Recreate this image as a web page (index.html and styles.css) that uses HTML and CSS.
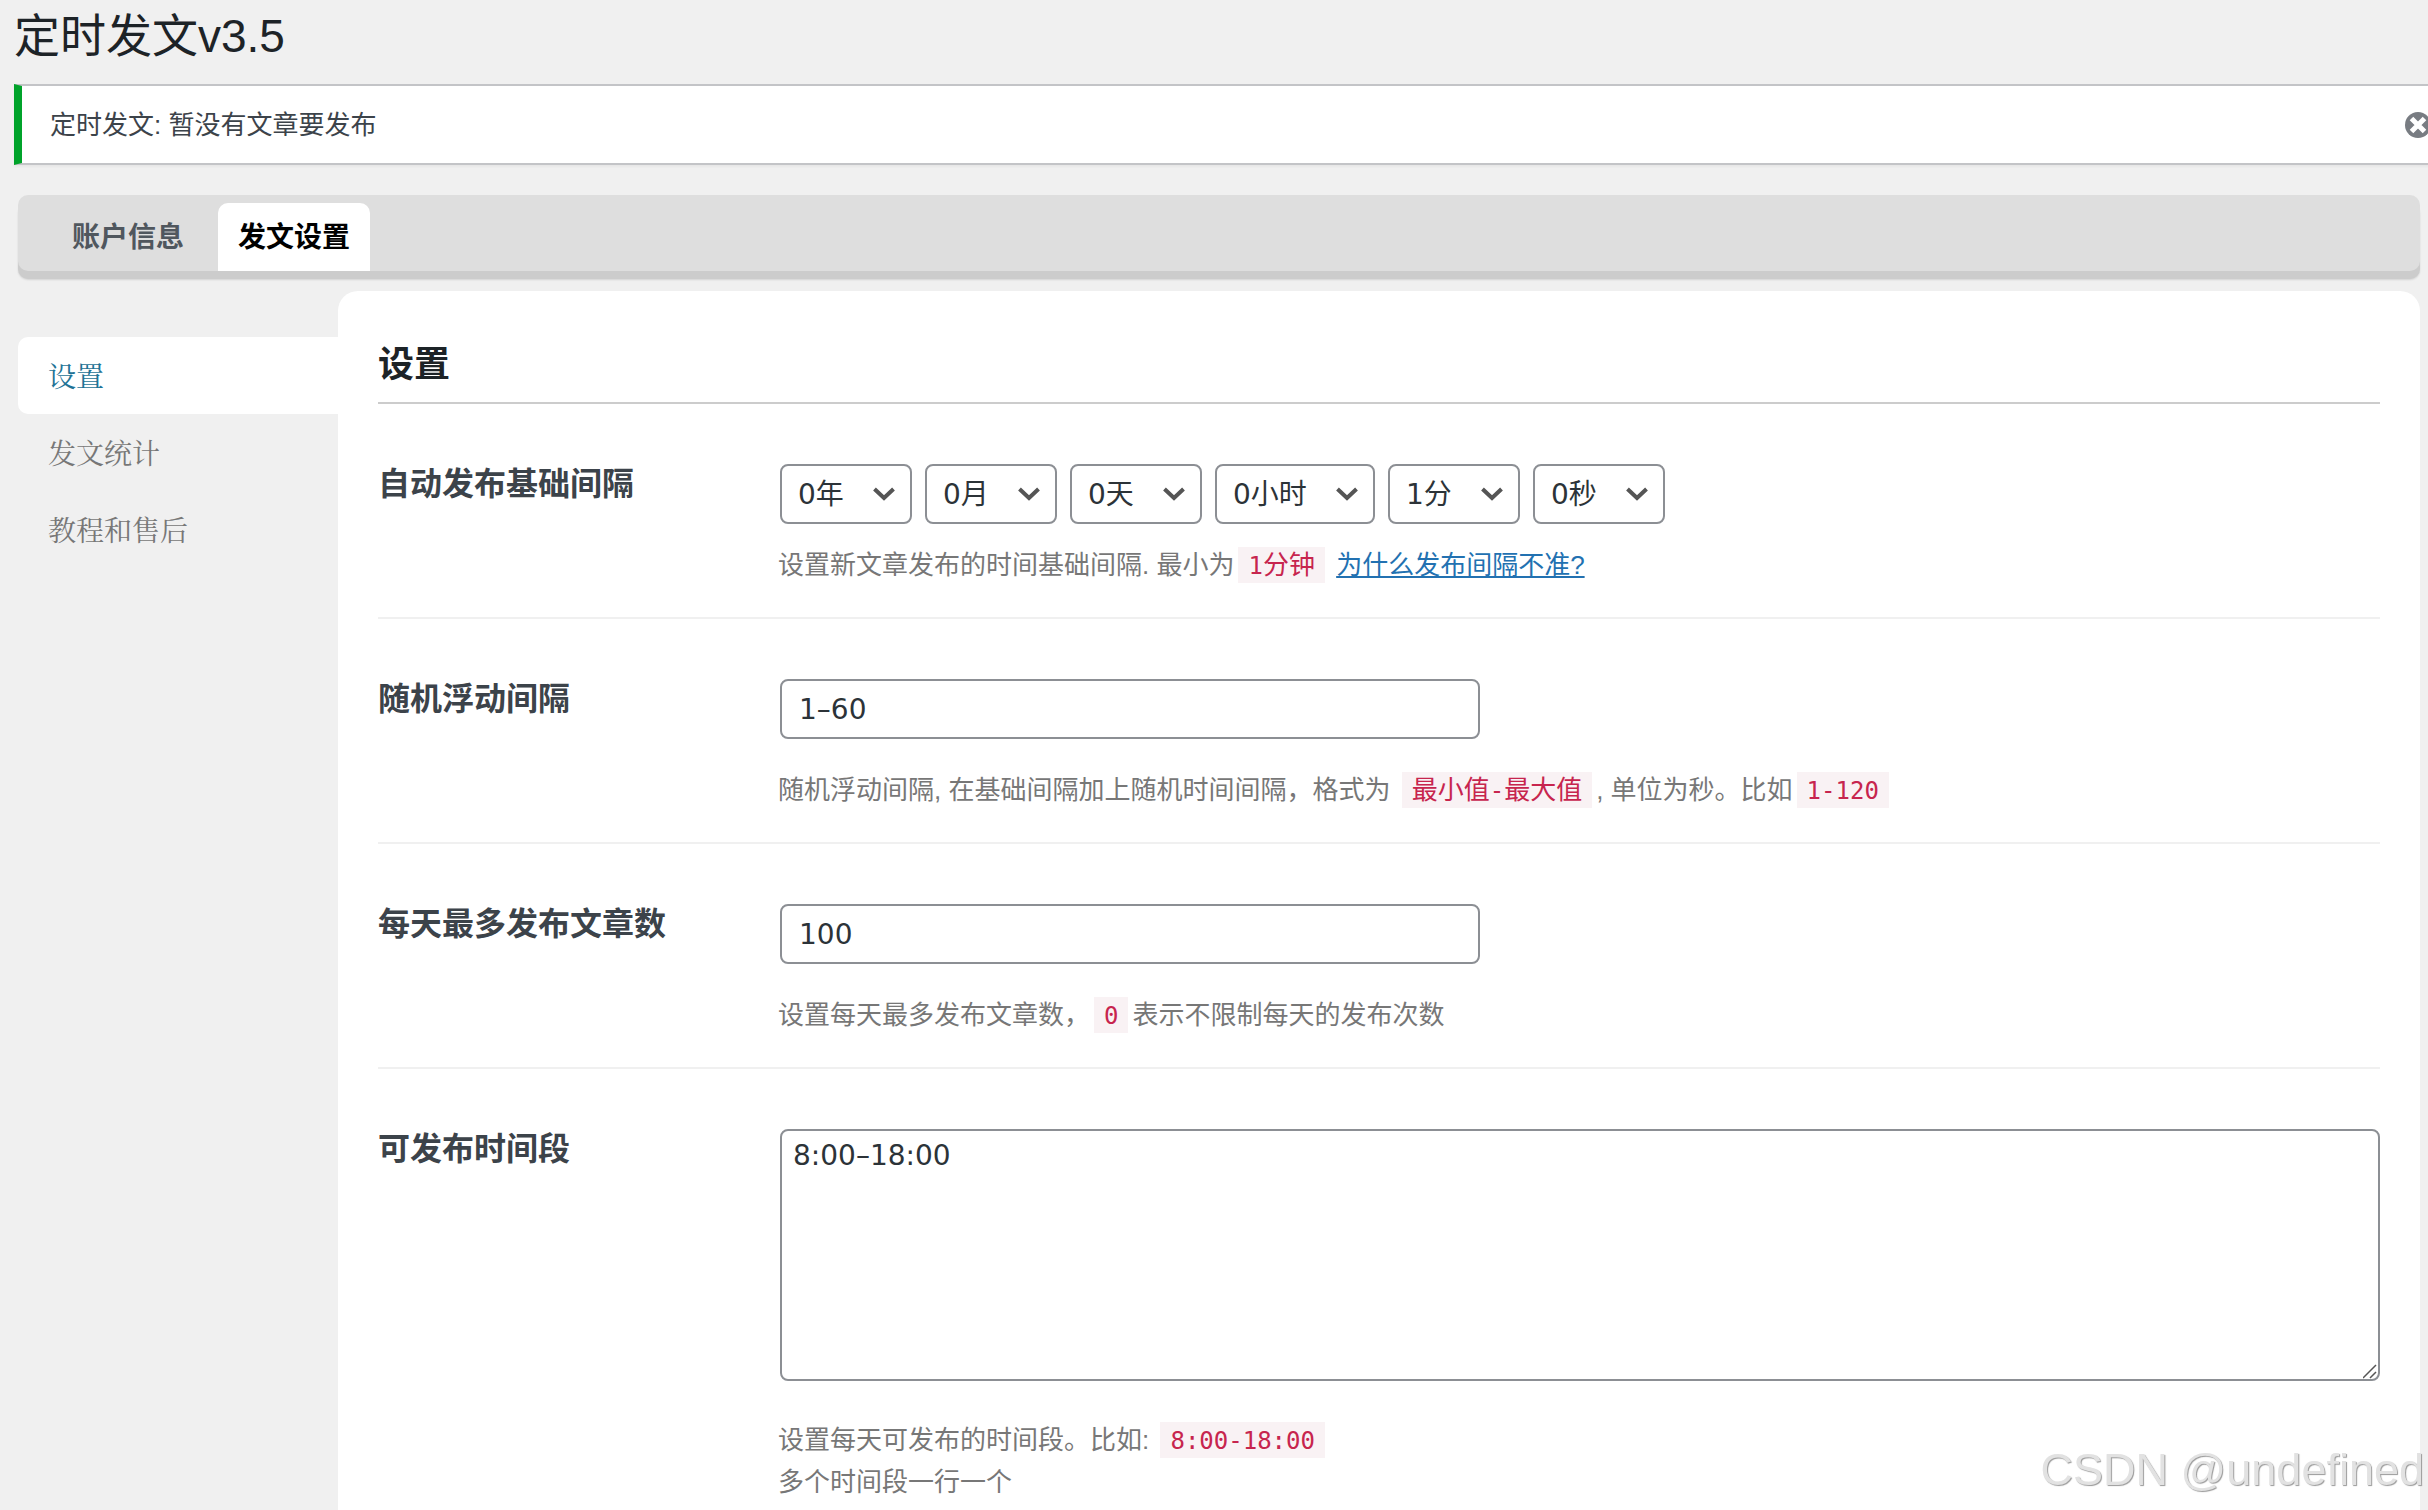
FILE: index.html
```html
<!DOCTYPE html>
<html lang="zh-CN">
<head>
<meta charset="utf-8">
<meta name="viewport" content="width=device-width, initial-scale=1">
<title>定时发文v3.5</title>
<link rel="stylesheet" href="styles.css">
</head>
<body>
<div class="wrap">
  <h1 class="page-title">定时发文v3.5</h1>

  <div class="notice">
    <p class="notice-text">定时发文: 暂没有文章要发布</p>
    <button class="notice-dismiss" type="button" aria-label="忽略此通知">
      <svg viewBox="0 0 26 26" width="26" height="26" aria-hidden="true">
        <circle cx="13" cy="13" r="13" fill="#787c82"/>
        <path d="M6.500 6.500l13 13M19.500 6.500L6.500 19.500" stroke="#fff" stroke-width="5"/>
      </svg>
    </button>
  </div>

  <nav class="tabs">
    <a class="tab" href="#account">账户信息</a>
    <a class="tab tab-active" href="#publish">发文设置</a>
  </nav>

  <div class="layout">
    <nav class="side">
      <a class="side-link side-active" href="#settings">设置</a>
      <a class="side-link" href="#stats">发文统计</a>
      <a class="side-link" href="#help">教程和售后</a>
    </nav>

    <main class="panel">
      <h2 class="panel-title">设置</h2>
      <form>
        <div class="field field-tight">
          <label class="field-label" for="year">自动发布基础间隔</label>
          <div class="field-body">
            <div class="selects">
              <select class="select" id="year"><option>0年</option></select>
              <select class="select" aria-label="月"><option>0月</option></select>
              <select class="select" aria-label="天"><option>0天</option></select>
              <select class="select" aria-label="小时"><option>0小时</option></select>
              <select class="select" aria-label="分"><option>1分</option></select>
              <select class="select" aria-label="秒"><option>0秒</option></select>
            </div>
            <p class="help">设置新文章发布的时间基础间隔. 最小为<code class="code"><span class="mono">1</span>分钟</code> <a class="link" href="#why">为什么发布间隔不准?</a></p>
          </div>
        </div>

        <div class="field">
          <label class="field-label" for="float">随机浮动间隔</label>
          <div class="field-body">
            <input class="input" id="float" type="text" value="1–60">
            <p class="help">随机浮动间隔, 在基础间隔加上随机时间间隔，格式为 <code class="code">最小值<span class="mono">-</span>最大值</code>, 单位为秒。比如<code class="code"><span class="mono">1-120</span></code></p>
          </div>
        </div>

        <div class="field">
          <label class="field-label" for="max">每天最多发布文章数</label>
          <div class="field-body">
            <input class="input" id="max" type="text" value="100">
            <p class="help">设置每天最多发布文章数，<code class="code"><span class="mono">0</span></code>表示不限制每天的发布次数</p>
          </div>
        </div>

        <div class="field field-area">
          <label class="field-label" for="period">可发布时间段</label>
          <div class="field-body">
            <textarea class="area" id="period">8:00–18:00</textarea>
            <p class="help">设置每天可发布的时间段。比如: <code class="code"><span class="mono">8:00-18:00</span></code><br>多个时间段一行一个</p>
          </div>
        </div>
      </form>
    </main>
  </div>
</div>
<div class="watermark">CSDN @undefined</div>
</body>
</html>
```
FILE: styles.css
```css
* {
  box-sizing: border-box;
}

body {
  margin: 0;
  background: #f0f0f0;
  color: #3c434a;
  font-family: "Liberation Sans", "Noto Sans CJK SC", sans-serif;
  font-size: 26px;
  line-height: 42px;
  overflow-x: hidden;
}

.wrap {
  display: flex;
  flex-direction: column;
  min-height: 100vh;
  padding: 0 8px 0 18px;
}

.page-title {
  margin: 0 0 0 -4px;
  padding: 6px 0 18px;
  color: #1d2327;
  font-size: 46px;
  font-weight: 400;
  line-height: 60px;
}

.notice {
  display: flex;
  align-items: center;
  justify-content: space-between;
  height: 81px;
  margin: 0 -12px 30px -4px;
  padding: 0 9px 0 28px;
  background: #fff;
  border: 2px solid #c3c4c7;
  border-left: 8px solid #00a32a;
  border-right: 0;
  box-shadow: 0 2px 2px rgba(0, 0, 0, 0.04);
}

.notice-text {
  margin: 0;
}

.notice-dismiss {
  flex: none;
  display: flex;
  margin: 0 -8px 0 0;
  padding: 0;
  background: none;
  border: 0;
}

.tabs {
  display: flex;
  gap: 14px;
  margin-bottom: 20px;
  padding: 8px 34px 0;
  background: #dedede;
  border-radius: 10px;
  box-shadow: 0 8px 0 #ccc, 0 9px 2px rgba(0, 0, 0, 0.12);
}

.tab {
  padding: 14px 20px 12px;
  border-radius: 10px 10px 0 0;
  color: #50575e;
  font-size: 28px;
  font-weight: 700;
  text-decoration: none;
}

.tab-active {
  background: #fff;
  color: #000;
}

.layout {
  display: flex;
  flex: 1;
}

.side {
  flex: none;
  display: flex;
  flex-direction: column;
  width: 320px;
  padding-top: 46px;
}

.side-link {
  padding: 17px 30px 18px;
  border-radius: 10px 0 0 10px;
  color: #777;
  font-family: "Noto Serif CJK SC", "Noto Sans CJK SC", serif;
  font-size: 28px;
  font-weight: 400;
  text-decoration: none;
}

.side-active {
  background: #fff;
  color: #1e7396;
}

.panel {
  flex: 1;
  padding: 40px 40px 0;
  background: #fff;
  border-radius: 20px 20px 0 0;
}

.panel-title {
  margin: 0;
  padding: 10px 0 13px;
  border-bottom: 2px solid #ccc;
  color: #1d2327;
  font-size: 36px;
  line-height: 48px;
}

.field {
  display: grid;
  grid-template-columns: 402px 1fr;
  padding: 60px 0 31px;
  border-bottom: 2px solid #f0f0f0;
}

.field-label {
  font-size: 32px;
  font-weight: 700;
  line-height: 40px;
}

.selects {
  display: flex;
  gap: 13px;
}

.select,
.input,
.area {
  display: block;
  margin: 0;
  background: #fff;
  border: 2px solid #8c8f94;
  border-radius: 8px;
  color: #2c3338;
  font-family: "DejaVu Sans", "Noto Sans CJK SC", sans-serif;
  font-size: 28px;
}

.select {
  appearance: none;
  height: 60px;
  padding: 0 66px 0 16px;
  background: #fff url("data:image/svg+xml,%3Csvg xmlns='http://www.w3.org/2000/svg' width='22' height='14' viewBox='0 0 22 14'%3E%3Cpath d='M1.5 2l9.500 9L20.500 2' fill='none' stroke='%23555' stroke-width='4'/%3E%3C/svg%3E") no-repeat right 15px center;
}

.input {
  width: 700px;
  max-width: 100%;
  height: 60px;
  padding: 0 17px;
}

.area {
  width: 100%;
  height: 252px;
  padding: 5px 11px;
  line-height: 40px;
  resize: vertical;
}

.area::-webkit-resizer {
  background: url("data:image/svg+xml,%3Csvg xmlns='http://www.w3.org/2000/svg' width='15' height='15'%3E%3Cpath d='M0 14L13 1M7 14l6-6' stroke='%23555' stroke-width='1.500'/%3E%3C/svg%3E") no-repeat right bottom;
}

.help {
  margin: 30px 0 0 -2px;
  color: #777;
}

.field-tight .help {
  margin-top: 20px;
}

.field-area {
  padding-bottom: 0;
  border-bottom: 0;
}

.field-area .help {
  margin-top: 38px;
}

.code {
  display: inline-block;
  height: 36px;
  margin: 0 4px;
  padding: 0 10px;
  background: #f9f2f4;
  color: #c7254e;
  font-family: "Noto Sans CJK SC", monospace;
  font-size: 26px;
  line-height: 32px;
}

.mono {
  font-family: "DejaVu Sans Mono", monospace;
  font-size: 24px;
}

.link {
  color: #2271b1;
}

.watermark {
  position: fixed;
  right: 4px;
  bottom: 10px;
  color: #e2e2e2;
  font-size: 45px;
  line-height: 60px;
  text-shadow: 1px 1px 1px #999;
  pointer-events: none;
}
```
